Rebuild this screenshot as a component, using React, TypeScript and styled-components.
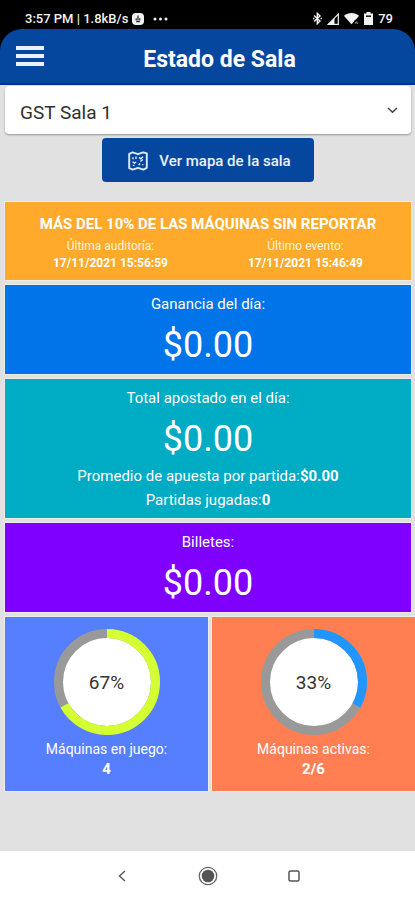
import React from 'react';
import styled, { createGlobalStyle } from 'styled-components';

const GlobalStyle = createGlobalStyle`
  *, *::before, *::after { box-sizing: border-box; }
  body { margin: 0; background: #e1e1e1; font-family: Roboto, "Liberation Sans", sans-serif; }
  button, select { font-family: inherit; }
`;

const Screen = styled.div`
  display: flex;
  flex-direction: column;
  min-height: 100vh;
  background: #e1e1e1;
`;

const StatusBar = styled.div`
  display: flex;
  align-items: center;
  justify-content: space-between;
  height: 29px;
  padding: 8px 22px 0 25px;
  background: #000;
  color: #f2f2f2;
  font-size: 13px;
  font-weight: 500;
  line-height: 20px;
`;

const StatusGroup = styled.div<{ $gap: number }>`
  display: flex;
  align-items: center;
  gap: ${({ $gap }) => $gap}px;
`;

const HeaderBack = styled.div`
  background: #000;
`;

const Header = styled.header`
  display: grid;
  grid-template-columns: 60px 1fr 38px;
  align-items: center;
  height: 56px;
  padding: 0 0 0 2px;
  background: #05479f;
  border-bottom: 2px solid #012d98;
  border-radius: 22px 22px 0 0;
`;

const MenuButton = styled.button`
  display: flex;
  justify-content: center;
  padding: 0 4px 0 0;
  border: 0;
  background: none;
`;

const Title = styled.h1`
  margin: 0;
  padding: 8px 0 0;
  color: #fff;
  font-size: 23px;
  font-weight: 700;
  line-height: 28px;
  text-align: center;
`;

const Main = styled.main`
  display: flex;
  flex: 1;
  flex-direction: column;
  padding: 1px 0 60px 5px;
`;

const Field = styled.label`
  display: grid;
  align-items: center;
  margin-right: 4px;
  background: #fff;
  border-radius: 4px;
  box-shadow: 0 1px 2px rgba(0, 0, 0, 0.35);

  > * { grid-area: 1 / 1; }
  > svg { justify-self: end; margin-right: 13px; pointer-events: none; }
`;

const RoomSelect = styled.select`
  width: 100%;
  height: 48px;
  padding: 4px 40px 0 15px;
  border: 0;
  border-radius: 4px;
  background: transparent;
  color: #303030;
  font-size: 19px;
  appearance: none;
`;

const MapButton = styled.button`
  display: flex;
  align-items: center;
  align-self: center;
  gap: 11px;
  height: 44px;
  margin: 4px 4px 20px 0;
  padding: 2px 23px 0 26px;
  border: 0;
  border-radius: 4px;
  background: #05479f;
  color: #e9f1ff;
  font-size: 15px;
  font-weight: 500;
`;

const Cards = styled.div`
  display: flex;
  flex-direction: column;
  gap: 5px;
`;

const Card = styled.section<{ $color: string }>`
  display: flex;
  flex-direction: column;
  align-items: center;
  margin-right: 4px;
  padding: 9px 8px 6px;
  background: ${({ $color }) => $color};
  box-shadow: 0 0 0 1px #ececec;
  color: #fff;
  text-align: center;
`;

const AlertTitle = styled.h2`
  margin: 0;
  padding-top: 4px;
  font-size: 15px;
  font-weight: 700;
  line-height: 18px;
`;

const AlertGrid = styled.div`
  display: grid;
  grid-template-columns: 1fr 1fr;
  align-self: stretch;
  padding: 5px 0 2px;
  font-size: 12px;
  line-height: 17px;
`;

const AlertItem = styled.div`
  display: flex;
  flex-direction: column;
  color: #fff3da;

  strong { color: #fff; }
`;

const CardLabel = styled.div`
  font-size: 15px;
  line-height: 20px;
`;

const Amount = styled.div`
  padding: 11px 0 3px;
  font-size: 36px;
  line-height: 40px;
`;

const Details = styled.div`
  padding-top: 2px;
  font-size: 15px;
  line-height: 24px;
`;

const Gauges = styled.div`
  display: grid;
  grid-template-columns: 1fr 1fr;
  gap: 4px;
`;

const GaugeCard = styled.section<{ $color: string }>`
  display: flex;
  flex-direction: column;
  align-items: center;
  padding: 12px 0;
  background: ${({ $color }) => $color};
  box-shadow: 0 0 0 1px #ececec;
  color: #fff;
  font-size: 14px;
  line-height: 20px;

  strong { font-size: 15px; }
`;

const Dial = styled.div`
  display: grid;
  place-items: center;
  margin-bottom: 4px;
  color: #333;
  font-size: 19px;

  > * { grid-area: 1 / 1; }
  > span { padding-top: 2px; }
`;

const NavBar = styled.nav`
  display: flex;
  align-items: center;
  justify-content: center;
  gap: 62px;
  height: 49px;
  background: #fff;
`;

const NavButton = styled.button`
  display: flex;
  align-items: center;
  justify-content: center;
  width: 24px;
  height: 24px;
  padding: 0;
  border: 0;
  background: none;
`;

const AlarmIcon = () => (
  <svg width="12" height="12" viewBox="0 0 12 12" aria-hidden="true">
    <rect width="12" height="12" rx="4" fill="#f2f2f2" />
    <path d="M6 2.5v5M4.2 5.2v2.4M7.8 5.2v2.4M4.2 8.6h3.6" stroke="#222" strokeWidth="1.2" />
  </svg>
);

const DotsIcon = () => (
  <svg width="15" height="4" viewBox="0 0 15 4" fill="#f2f2f2" aria-hidden="true">
    <circle cx="2" cy="2" r="1.5" />
    <circle cx="7.5" cy="2" r="1.5" />
    <circle cx="13" cy="2" r="1.5" />
  </svg>
);

const BluetoothIcon = () => (
  <svg width="9" height="13" viewBox="0 0 9 13" fill="none" stroke="#f2f2f2" strokeWidth="1.4" aria-hidden="true">
    <path d="M1 3.5l6 5.5-2.7 2.7V1.3L7 4 1 9.5" />
    <path d="M0 6.5h1.4M7.6 6.5H9" />
  </svg>
);

const SignalIcon = () => (
  <svg width="12" height="12" viewBox="0 0 12 12" aria-hidden="true">
    <path d="M1.2 11.3L11.3 1.2v10.1z" fill="none" stroke="#f2f2f2" strokeWidth="1.2" />
    <path d="M1 11.5L7.5 5v6.5z" fill="#f2f2f2" />
  </svg>
);

const WifiIcon = () => (
  <svg width="15" height="13" viewBox="0 0 16 13" aria-hidden="true">
    <path d="M0 3.6C4.4-.4 11.6-.4 16 3.6L12.8 7.6 11.6 8 8.3 12.2z" fill="#f2f2f2" />
    <path d="M0 3.6L8 12.6l3-3.6" fill="#f2f2f2" />
    <path d="M12 11.8l1.5-2M13.8 12.2l1-1.4" stroke="#f2f2f2" strokeWidth="1" />
  </svg>
);

const BatteryIcon = () => (
  <svg width="9" height="13" viewBox="0 0 9 13" aria-hidden="true">
    <path d="M2.5 0h4v1.5H9V13H0V1.5h2.5z" fill="#f2f2f2" />
    <path d="M2 3.4h5V5H2z" fill="#222" />
  </svg>
);

const MenuIcon = () => (
  <svg width="28" height="20" viewBox="0 0 28 20" fill="#eaf2ff" aria-hidden="true">
    <rect width="28" height="4" />
    <rect y="8" width="28" height="4" />
    <rect y="16" width="28" height="4" />
  </svg>
);

const MapIcon = () => (
  <svg width="20" height="20" viewBox="0 0 20 20" fill="none" stroke="#dcebff" aria-hidden="true">
    <path d="M1.2 2.8L4.5 1.4l5.5 1.8 5-1.8 3.8 1v14.4l-3.4 1.8-5.4-1.8-5.3 1.8-3.5-1.4z" strokeWidth="1.9" strokeLinejoin="round" />
    <path d="M5 6.2v2M8 5.6v2.4M4.6 10.8l1.8 1.4 1.8-1.2M11 6.4l1.8 1.4 2.2-2M14.8 8.4l-2.4 2.2M4.8 14.4h1.6M10.6 14l1.6-1.6M14.2 13.6h1.2" strokeWidth="1.4" />
  </svg>
);

const ChevronIcon = () => (
  <svg width="11" height="7" viewBox="0 0 11 7" fill="none" stroke="#444" strokeWidth="1.5" aria-hidden="true">
    <path d="M1 1l4.5 4.2L10 1" />
  </svg>
);

const BackIcon = () => (
  <svg width="8" height="12" viewBox="0 0 8 12" fill="none" stroke="#5a5a5a" strokeWidth="1.5" aria-hidden="true">
    <path d="M7 1L1.5 6 7 11" />
  </svg>
);

const HomeIcon = () => (
  <svg width="20" height="20" viewBox="0 0 20 20" aria-hidden="true">
    <circle cx="10" cy="10" r="8.7" fill="none" stroke="#666" strokeWidth="1.3" />
    <circle cx="10" cy="10" r="6.3" fill="#555" />
  </svg>
);

const RecentIcon = () => (
  <svg width="12" height="12" viewBox="0 0 12 12" aria-hidden="true">
    <rect x="1" y="1" width="10" height="10" rx="1.5" fill="none" stroke="#555" strokeWidth="1.5" />
  </svg>
);

type GaugeProps = { color: string; arc: string; percent: number; label: string; value: string };

const Gauge = ({ color, arc, percent, label, value }: GaugeProps) => (
  <GaugeCard $color={color}>
    <Dial>
      <svg width="106" height="106" viewBox="0 0 106 106" aria-hidden="true">
        <circle cx="53" cy="53" r="48.5" fill="#fff" stroke="#999" strokeWidth="9" />
        <circle
          cx="53"
          cy="53"
          r="48.5"
          fill="none"
          stroke={arc}
          strokeWidth="9"
          pathLength={100}
          strokeDasharray={`${percent} 100`}
          transform="rotate(-90 53 53)"
        />
      </svg>
      <span>{percent}%</span>
    </Dial>
    <span>{label}</span>
    <strong>{value}</strong>
  </GaugeCard>
);

export default function App() {
  return (
    <>
      <GlobalStyle />
      <Screen>
        <StatusBar>
          <StatusGroup $gap={9}>
            <StatusGroup $gap={4}>
              <span>3:57 PM | 1.8kB/s</span>
              <AlarmIcon />
            </StatusGroup>
            <DotsIcon />
          </StatusGroup>
          <StatusGroup $gap={5}>
            <BluetoothIcon />
            <SignalIcon />
            <WifiIcon />
            <BatteryIcon />
            <span>79</span>
          </StatusGroup>
        </StatusBar>
        <HeaderBack>
          <Header>
            <MenuButton type="button" aria-label="Menú">
              <MenuIcon />
            </MenuButton>
            <Title>Estado de Sala</Title>
          </Header>
        </HeaderBack>
        <Main>
          <Field>
            <RoomSelect aria-label="Sala" defaultValue="1">
              <option value="1">GST Sala 1</option>
            </RoomSelect>
            <ChevronIcon />
          </Field>
          <MapButton type="button">
            <MapIcon />
            Ver mapa de la sala
          </MapButton>
          <Cards>
            <Card $color="#ffaa2a">
              <AlertTitle>MÁS DEL 10% DE LAS MÁQUINAS SIN REPORTAR</AlertTitle>
              <AlertGrid>
                <AlertItem>
                  <span>Última auditoría:</span>
                  <strong>17/11/2021 15:56:59</strong>
                </AlertItem>
                <AlertItem>
                  <span>Último evento:</span>
                  <strong>17/11/2021 15:46:49</strong>
                </AlertItem>
              </AlertGrid>
            </Card>
            <Card $color="#0074e8">
              <CardLabel>Ganancia del día:</CardLabel>
              <Amount>$0.00</Amount>
            </Card>
            <Card $color="#00abc4">
              <CardLabel>Total apostado en el día:</CardLabel>
              <Amount>$0.00</Amount>
              <Details>
                <div>
                  Promedio de apuesta por partida:<strong>$0.00</strong>
                </div>
                <div>
                  Partidas jugadas:<strong>0</strong>
                </div>
              </Details>
            </Card>
            <Card $color="#8000ff">
              <CardLabel>Billetes:</CardLabel>
              <Amount>$0.00</Amount>
            </Card>
            <Gauges>
              <Gauge color="#557fff" arc="#d4ff33" percent={67} label="Máquinas en juego:" value="4" />
              <Gauge color="#ff7f53" arc="#2196ff" percent={33} label="Máquinas activas:" value="2/6" />
            </Gauges>
          </Cards>
        </Main>
        <NavBar>
          <NavButton type="button" aria-label="Atrás">
            <BackIcon />
          </NavButton>
          <NavButton type="button" aria-label="Inicio">
            <HomeIcon />
          </NavButton>
          <NavButton type="button" aria-label="Recientes">
            <RecentIcon />
          </NavButton>
        </NavBar>
      </Screen>
    </>
  );
}
